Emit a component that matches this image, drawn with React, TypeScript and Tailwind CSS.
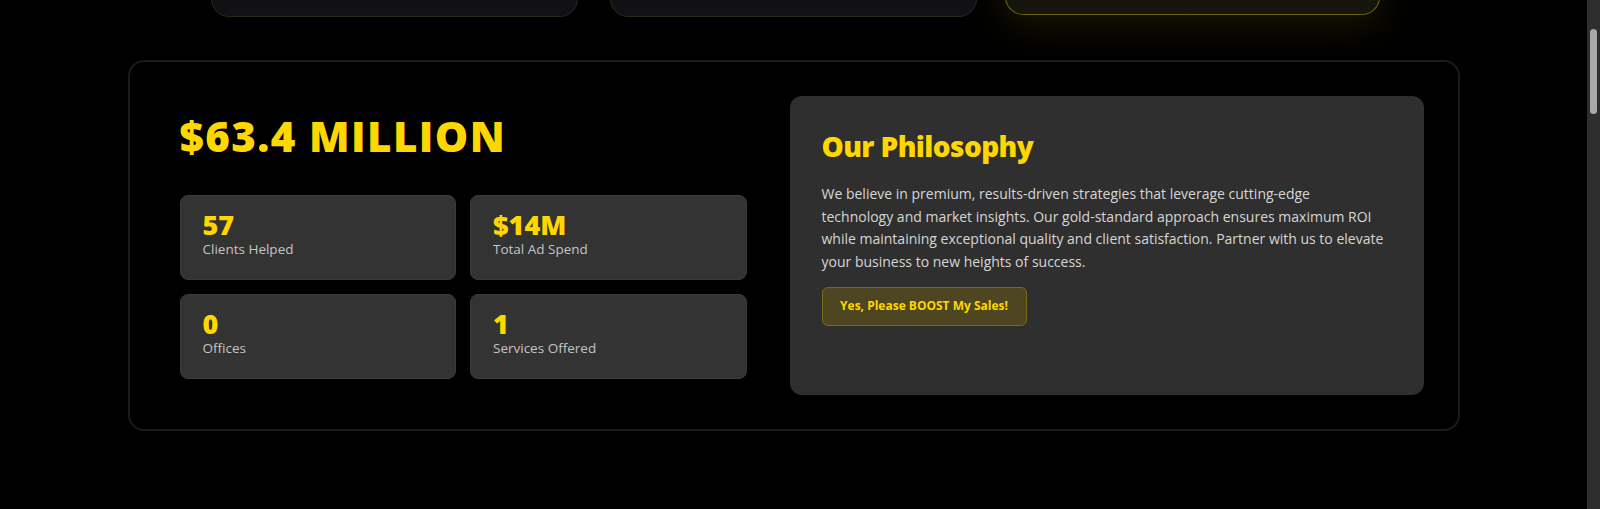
import React from "react";

const font = `font-['Open_Sans','Noto_Sans',sans-serif]`;

const stats = [
  { value: "57", label: "Clients Helped" },
  { value: "$14M", label: "Total Ad Spend" },
  { value: "0", label: "Offices" },
  { value: "1", label: "Services Offered" },
];

function TopCards() {
  return (
    <div className="mx-auto -mt-[103px] grid w-[1166px] grid-cols-3 gap-8">
      <div className="h-[120px] rounded-[18px] border border-[#2a2918] bg-gradient-to-b from-[#0c0c0f] to-[#121216]" />
      <div className="h-[120px] rounded-[18px] border border-[#2a2918] bg-gradient-to-b from-[#0c0c0f] to-[#121216]" />
      <div className="h-[120px] -translate-y-[2px] scale-x-[1.022] rounded-[18px] border border-[#6b5e12] bg-gradient-to-b from-[#121108] to-[#17160c] shadow-[0_8px_40px_rgba(255,215,0,0.12)]" />
    </div>
  );
}

function StatCard({ value, label }: { value: string; label: string }) {
  return (
    <div className="h-[85px] rounded-lg border border-[#3b3b3b] bg-[#333333] px-[22px] pt-[14px]">
      <p className="text-[27px] font-extrabold leading-[30px] text-[#FFD700]">{value}</p>
      <p className="text-[13.5px] leading-[18px] text-[#c4c4c4]">{label}</p>
    </div>
  );
}

export default function App() {
  return (
    <div className={`flex h-[509px] w-full overflow-hidden bg-black ${font}`}>
      <main className="flex-1">
        <TopCards />
        <section className="mx-auto mt-[43px] flex w-[1332px] gap-[27px] rounded-2xl border-2 border-[#1b1b1b] bg-black p-[34px]">
          <div className="flex-1 p-4">
            <h2 className="text-[42px] font-extrabold leading-[48px] tracking-[1.4px] text-[#FFD700]">
              $63.4 MILLION
            </h2>
            <div className="mt-[35px] grid grid-cols-2 gap-[14px]">
              {stats.map((s) => (
                <StatCard key={s.label} value={s.value} label={s.label} />
              ))}
            </div>
          </div>
          <div className="h-[299px] w-[634px] rounded-xl bg-[#2f2f2f] p-8">
            <h3 className="text-[28px] font-extrabold leading-[36px] tracking-[-0.6px] text-[#FFD700]">
              Our Philosophy
            </h3>
            <p className="mt-[19px] text-[14px] leading-[22.7px] text-[#d6d6d6]">
              We believe in premium, results-driven strategies that leverage cutting-edge
              <br />
              technology and market insights. Our gold-standard approach ensures maximum ROI
              <br />
              while maintaining exceptional quality and client satisfaction. Partner with us to elevate
              <br />
              your business to new heights of success.
            </p>
            <button className="mt-[13px] h-[39px] w-[205px] rounded-md border border-[#7a6a14] bg-[#4d4620] text-[12px] font-bold text-[#FFD700]">
              Yes, Please BOOST My Sales!
            </button>
          </div>
        </section>
      </main>
      <div className="relative w-[13px] bg-[#2e2e2e]">
        <div className="absolute left-[3px] top-[29px] h-[85px] w-[7px] rounded-full bg-[#a9a9a9]" />
      </div>
    </div>
  );
}
